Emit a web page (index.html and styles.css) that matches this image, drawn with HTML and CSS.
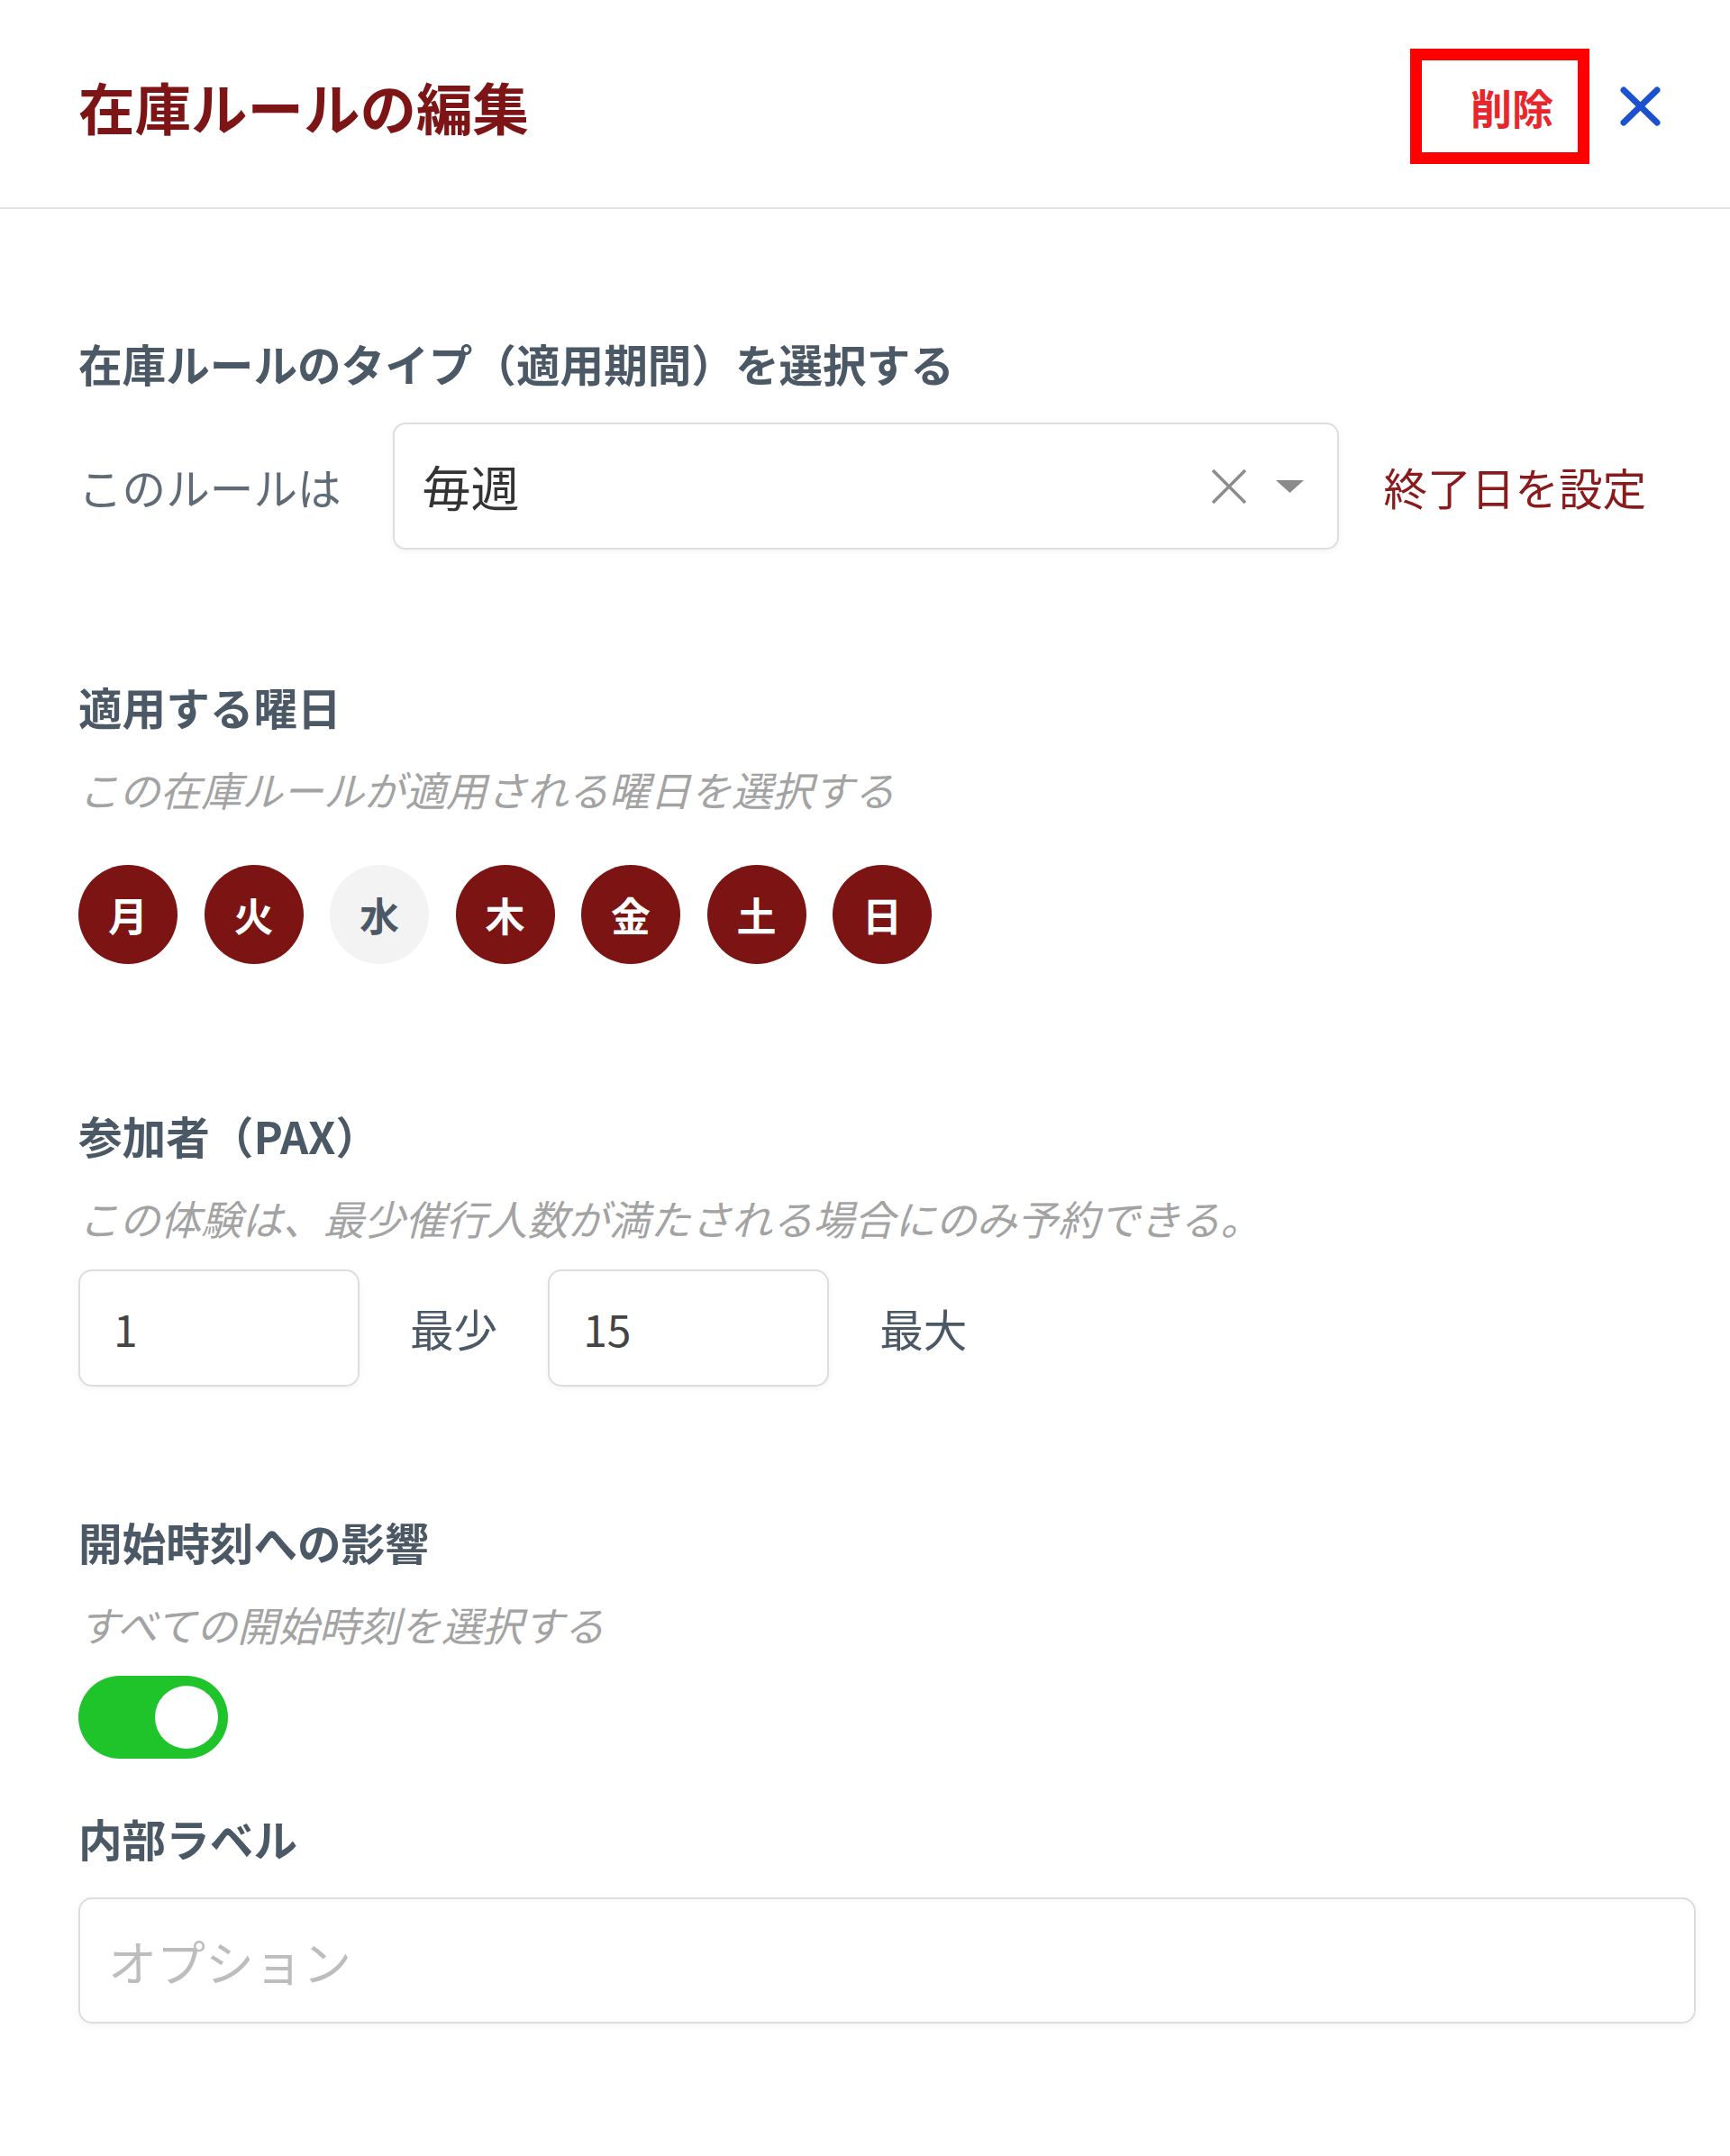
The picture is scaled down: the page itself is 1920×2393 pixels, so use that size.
FILE: index.html
```html
<!DOCTYPE html>
<html lang="ja">
<head>
    <meta charset="UTF-8">
    <meta name="viewport" content="width=device-width, initial-scale=1.0">
    <title>在庫ルールの編集</title>
    <link rel="stylesheet" href="styles.css">
</head>
<body>
    <div class="panel">
        <!-- Header -->
        <header class="panel-header">
            <h1 class="panel-title">在庫ルールの編集</h1>
            <div class="header-actions">
                <button class="btn-delete" type="button">削除</button>
                <button class="btn-close" type="button" aria-label="閉じる">
                    <svg width="49" height="48" viewBox="0 0 49 48">
                        <path d="M6 6 L43 42 M43 6 L6 42" stroke="#1b50cf" stroke-width="7" stroke-linecap="round" fill="none"/>
                    </svg>
                </button>
            </div>
        </header>

        <main class="panel-body">
            <!-- Rule type -->
            <section class="field field-type">
                <h2 class="field-label">在庫ルールのタイプ（適用期間）を選択する</h2>
                <div class="type-row">
                    <span class="type-prefix">このルールは</span>
                    <div class="select-box">
                        <span class="select-value">毎週</span>
                        <svg class="select-clear" width="40" height="40" viewBox="0 0 40 40">
                            <path d="M2 2 L38 38 M38 2 L2 38" stroke="#8c8c8c" stroke-width="3.5" fill="none"/>
                        </svg>
                        <svg class="select-caret" width="31" height="14" viewBox="0 0 31 14">
                            <path d="M0 0 H31 L15.5 14 Z" fill="#8a8a8a"/>
                        </svg>
                    </div>
                    <a class="link-end" href="#">終了日を設定</a>
                </div>
            </section>

            <!-- Days of week -->
            <section class="field field-days">
                <h2 class="field-label">適用する曜日</h2>
                <p class="field-hint">この在庫ルールが適用される曜日を選択する</p>
                <div class="day-list">
                    <span class="day">月</span>
                    <span class="day">火</span>
                    <span class="day off">水</span>
                    <span class="day">木</span>
                    <span class="day">金</span>
                    <span class="day">土</span>
                    <span class="day">日</span>
                </div>
            </section>

            <!-- Participants -->
            <section class="field field-pax">
                <h2 class="field-label">参加者（PAX）</h2>
                <p class="field-hint">この体験は、最少催行人数が満たされる場合にのみ予約できる。</p>
                <div class="pax-row">
                    <input class="num-input" type="text" value="1">
                    <span class="pax-unit">最少</span>
                    <input class="num-input" type="text" value="15">
                    <span class="pax-unit">最大</span>
                </div>
            </section>

            <!-- Start times -->
            <section class="field field-times">
                <h2 class="field-label">開始時刻への影響</h2>
                <p class="field-hint">すべての開始時刻を選択する</p>
                <div class="toggle on"><span class="toggle-knob"></span></div>
            </section>

            <!-- Internal label -->
            <section class="field field-internal">
                <h2 class="field-label">内部ラベル</h2>
                <input class="text-input" type="text" placeholder="オプション">
            </section>
        </main>
    </div>
</body>
</html>
```

FILE: styles.css
```css
body {
    margin: 0;
    padding: 0;
    background: #fff;
    font-family: "Noto Sans CJK JP", "Noto Sans", sans-serif;
    color: #4b5865;
}

button {
    font: inherit;
    background: none;
    border: 0;
    padding: 0;
    cursor: pointer;
}

/* Header */
.panel-header {
    height: 232px;
    box-sizing: border-box;
    padding: 6px 75px 0 87px;
    display: flex;
    align-items: center;
    justify-content: space-between;
    border-bottom: 2px solid #e3e3e3;
}

.panel-title {
    margin: 0;
    font-size: 62.5px;
    line-height: 80px;
    font-weight: 700;
    color: #7d1517;
}

.header-actions {
    display: flex;
    align-items: center;
    gap: 32px;
}

.btn-delete {
    height: 128px;
    width: 199px;
    box-sizing: border-box;
    border: 13px solid #ff0000;
    padding: 0 26px 0 54px;
    display: flex;
    align-items: center;
    font-size: 46px;
    font-weight: 700;
    color: #e8262c;
}

.btn-close {
    display: flex;
}

/* Body */
.panel-body {
    padding: 141px 38px 60px 87px;
}

.field-label {
    margin: 0 0 33px;
    font-size: 48.6px;
    line-height: 60px;
    font-weight: 700;
    color: #4b5865;
}

.field-hint {
    margin: 0 0 30px;
    font-size: 45.3px;
    line-height: 56px;
    font-style: italic;
    color: #a3a3a3;
}

.field-type .field-label { margin-bottom: 36px; }
.field-days { margin-top: 144px; }
.field-days .field-hint { margin-bottom: 57px; }
.field-pax { margin-top: 160px; }
.field-times { margin-top: 142px; }
.field-internal { margin-top: 58px; }
.field-internal .field-label { margin-bottom: 36px; }

/* Rule type row */
.type-row {
    display: flex;
    align-items: center;
}

.type-prefix {
    font-size: 48.6px;
    line-height: 60px;
    color: #5f6b76;
    margin-right: 57px;
}

.select-box {
    width: 1050px;
    height: 141px;
    box-sizing: border-box;
    border: 2px solid #dedede;
    border-radius: 14px;
    box-shadow: 0 2px 10px rgba(0, 0, 0, 0.05);
    padding: 0 37px 0 31px;
    display: flex;
    align-items: center;
}

.select-value {
    flex: 1;
    font-size: 54px;
    color: #333;
}

.select-clear {
    margin-right: 32px;
}

.link-end {
    margin-left: 50px;
    font-size: 48.6px;
    color: #8b1a1c;
    text-decoration: none;
}

/* Days */
.day-list {
    display: flex;
    gap: 29.5px;
}

.day {
    width: 110px;
    height: 110px;
    border-radius: 50%;
    background: #7b1412;
    color: #fff;
    font-size: 44px;
    font-weight: 700;
    display: flex;
    align-items: center;
    justify-content: center;
}

.day.off {
    background: #f3f3f3;
    color: #4b5865;
}

/* Participants */
.pax-row {
    display: flex;
    align-items: center;
    gap: 56px;
}

.num-input {
    width: 312px;
    height: 130px;
    box-sizing: border-box;
    border: 2px solid #dddddd;
    border-radius: 15px;
    box-shadow: 0 2px 10px rgba(0, 0, 0, 0.05);
    padding: 0 37px;
    font-family: inherit;
    font-size: 48px;
    color: #444;
    outline: none;
}

.pax-unit {
    font-size: 48.6px;
    color: #4b5865;
}

/* Toggle */
.toggle {
    width: 166px;
    height: 92px;
    box-sizing: border-box;
    padding: 11px;
    border-radius: 46px;
    background: #ccc;
    display: flex;
}

.toggle.on {
    background: #1fc32a;
    justify-content: flex-end;
}

.toggle-knob {
    width: 70px;
    height: 70px;
    border-radius: 50%;
    background: #fff;
}

/* Internal label */
.text-input {
    width: 100%;
    height: 140px;
    box-sizing: border-box;
    border: 2px solid #dddddd;
    border-radius: 15px;
    box-shadow: 0 2px 10px rgba(0, 0, 0, 0.05);
    padding: 0 31px;
    font-family: inherit;
    font-size: 54px;
    color: #333;
    outline: none;
}

.text-input::placeholder {
    color: #bdbdbd;
}
```
